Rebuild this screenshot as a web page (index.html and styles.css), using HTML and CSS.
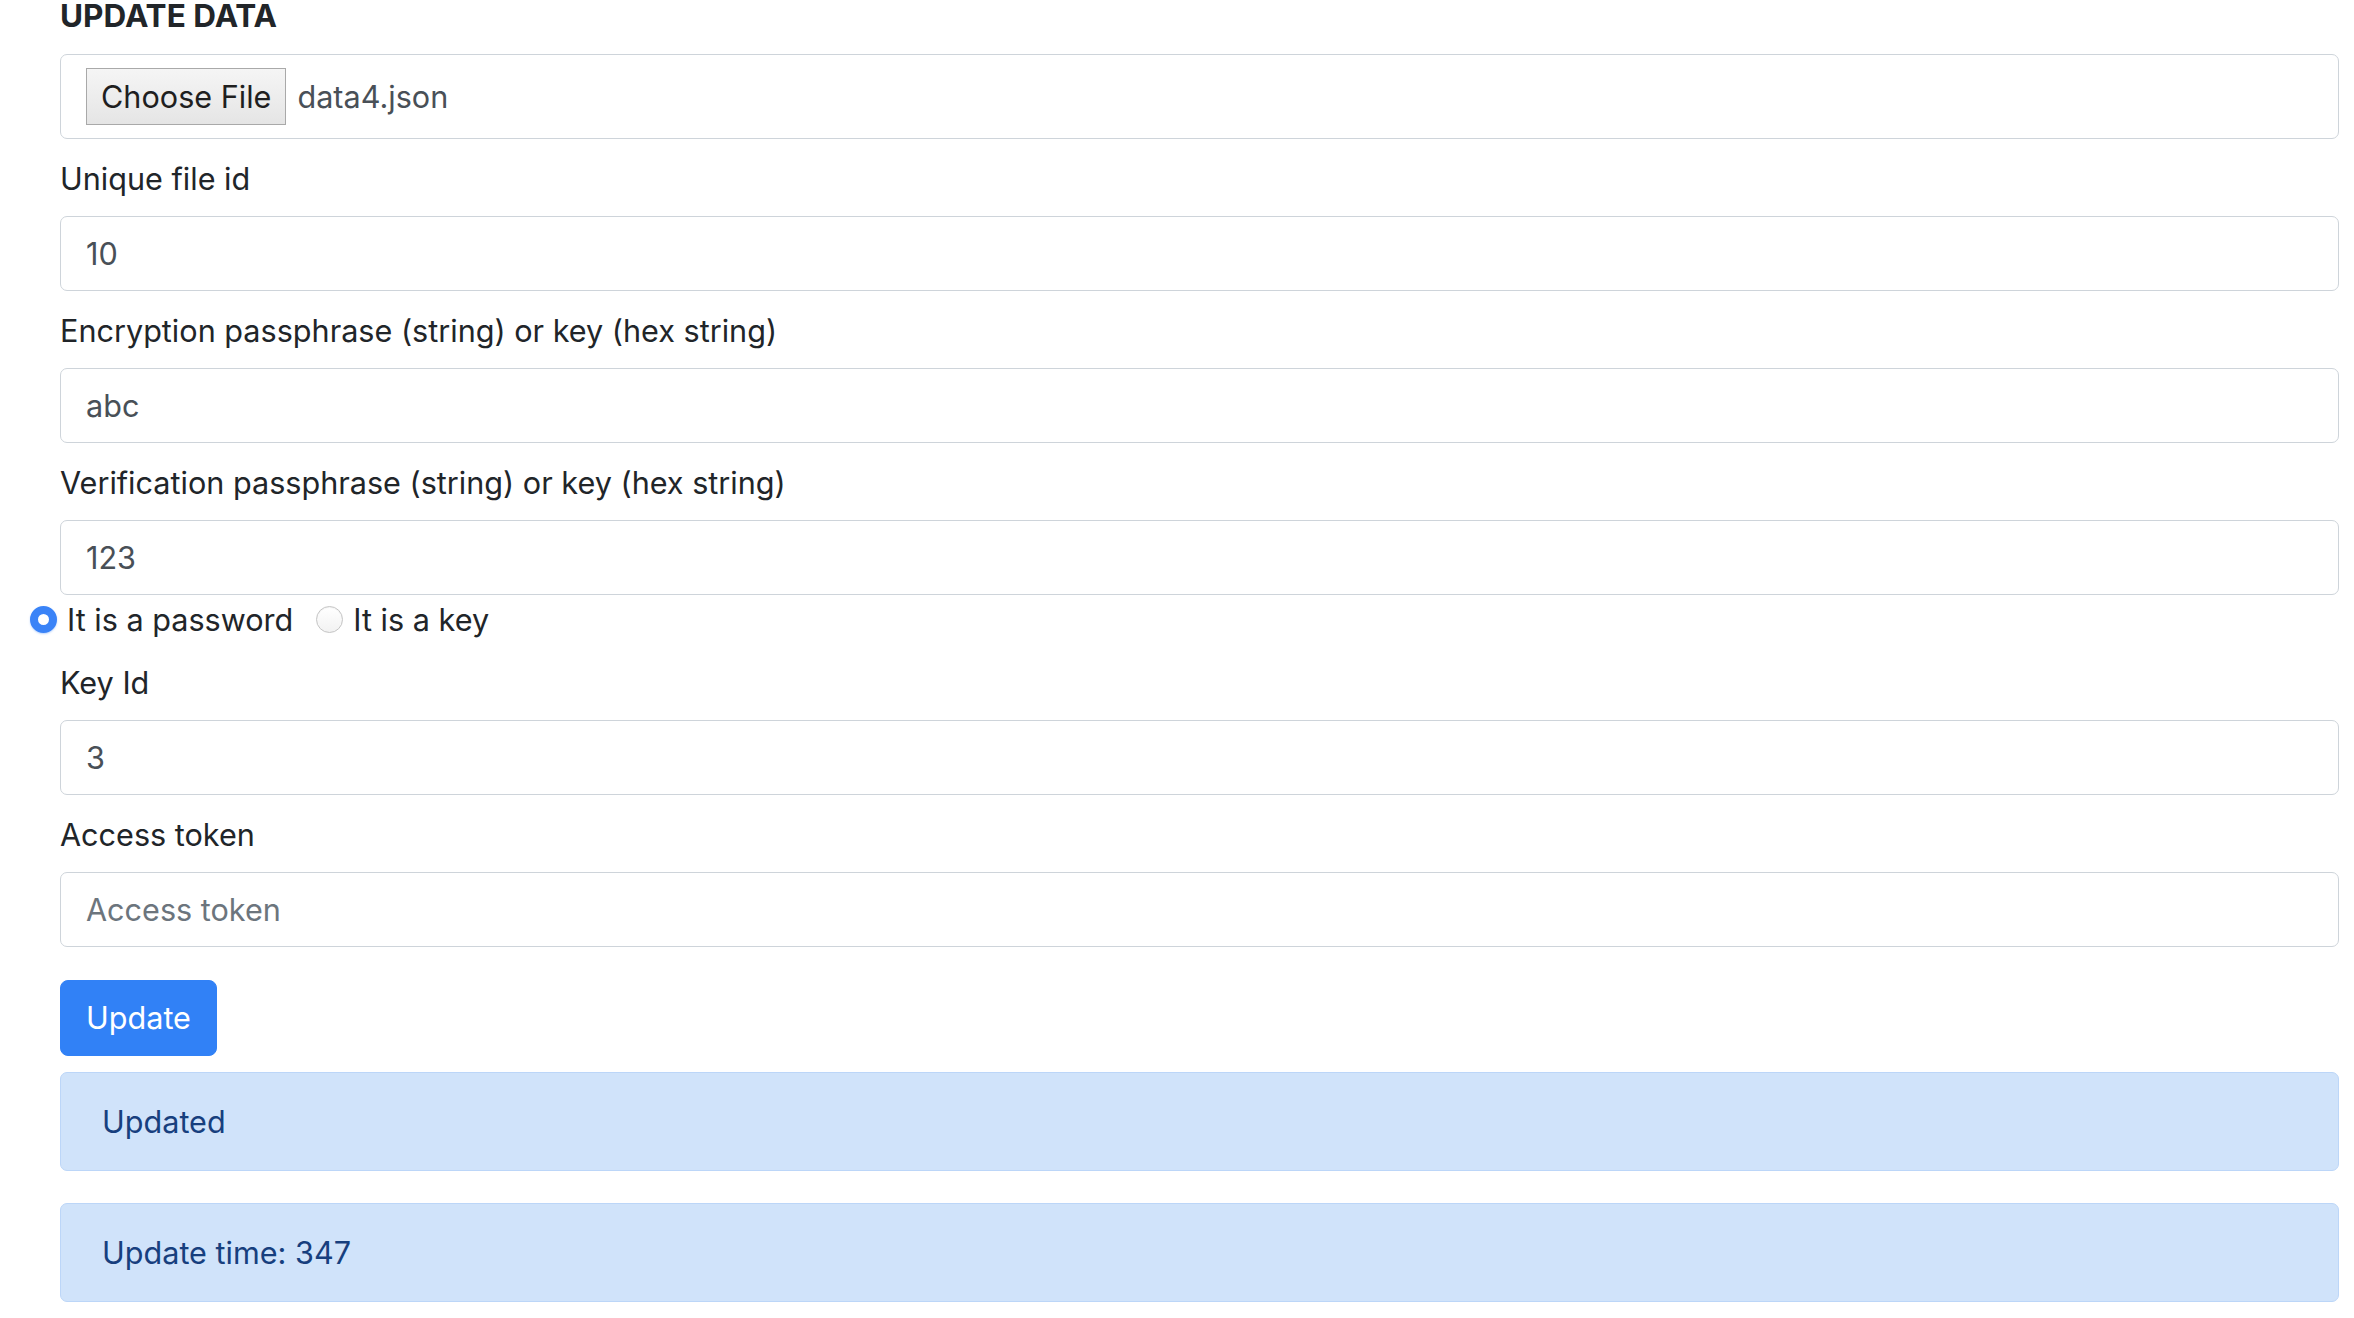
FILE: index.html
```html
<!DOCTYPE html>
<html lang="en">
  <head>
    <meta charset="UTF-8" />
    <meta name="viewport" content="width=device-width, initial-scale=1.0" />
    <title>Update data</title>
    <link rel="stylesheet" href="styles.css">
  </head>
  <body>
    <div class="page">
      <h5 class="title">UPDATE DATA</h5>

      <div class="file-box">
        <span class="file-btn">Choose File</span>
        <span class="file-name">data4.json</span>
      </div>

      <div class="group">
        <label for="fileId">Unique file id</label>
        <input class="field" type="text" id="fileId" value="10" />
      </div>

      <div class="group">
        <label for="encKey">Encryption passphrase (string) or key (hex string)</label>
        <input class="field" type="text" id="encKey" value="abc" />
      </div>

      <div class="group group-radio">
        <label for="verKey">Verification passphrase (string) or key (hex string)</label>
        <input class="field" type="text" id="verKey" value="123" />
        <div class="radios">
          <label class="radio-item">
            <input type="radio" name="kind" checked />
            <span>It is a password</span>
          </label>
          <label class="radio-item">
            <input type="radio" name="kind" />
            <span>It is a key</span>
          </label>
        </div>
      </div>

      <div class="group">
        <label for="keyId">Key Id</label>
        <input class="field" type="text" id="keyId" value="3" />
      </div>

      <div class="group">
        <label for="token">Access token</label>
        <input class="field" type="text" id="token" placeholder="Access token" />
      </div>

      <button class="btn" type="button">Update</button>

      <div class="alert">Updated</div>
      <div class="alert">Update time: 347</div>
    </div>
  </body>
</html>
```

FILE: styles.css
```css
/* Reset */
* {
  margin: 0;
  padding: 0;
  box-sizing: border-box;
}

body {
  font-family: "Inter", "Roboto", "Liberation Sans", sans-serif;
  font-size: 30.6px;
  line-height: 45px;
  color: #212529;
  background: #ffffff;
  overflow: hidden;
}

/* Page */
.page {
  padding: 0 15px 0 60px;
}

.title {
  font-size: 31.5px;
  font-weight: 700;
  line-height: 30px;
  padding-top: 1px;
  margin-bottom: 22.5px;
  color: #212529;
}

/* File picker */
.file-box {
  height: 85px;
  border: 1.5px solid #ced4da;
  border-radius: 7px;
  display: flex;
  align-items: center;
  padding: 0 25px;
  gap: 11px;
  margin-bottom: 17px;
}

.file-btn {
  height: 57px;
  padding: 0 14px;
  display: flex;
  align-items: center;
  border: 1.5px solid #a9a9a9;
  background: linear-gradient(#f5f5f5, #e5e5e5);
  color: #1f1f1f;
}

.file-name {
  color: #495057;
}

/* Form groups */
.group {
  display: flex;
  flex-direction: column;
  margin-bottom: 17px;
}

.group label {
  line-height: 45px;
  margin-bottom: 15px;
}

.group-radio {
  margin-bottom: 18px;
}

.field {
  height: 75px;
  width: 100%;
  padding: 0 25px;
  font-family: inherit;
  font-size: 30.6px;
  color: #495057;
  border: 1.5px solid #ced4da;
  border-radius: 7px;
  background: #ffffff;
  outline: none;
}

.field::placeholder {
  color: #6c757d;
}

/* Radios */
.radios {
  display: flex;
  align-items: center;
  gap: 23px;
  margin-top: 2px;
  margin-left: -30px;
}

.group .radio-item {
  display: flex;
  align-items: center;
  gap: 10px;
  margin-bottom: 0;
}

.radio-item input {
  appearance: none;
  -webkit-appearance: none;
  width: 27px;
  height: 27px;
  border-radius: 50%;
  border: 1.5px solid #c4c4c4;
  background: linear-gradient(#ffffff, #f2f2f2);
  box-shadow: inset 0 1px 1px rgba(0, 0, 0, 0.05);
}

.radio-item input:checked {
  border: 8.5px solid #3a83f7;
  background: #ffffff;
  box-shadow: 0 1px 2px rgba(58, 131, 247, 0.35);
}

/* Button */
.btn {
  height: 76px;
  padding: 0 25px;
  font-family: inherit;
  font-size: 30.6px;
  line-height: 45px;
  color: #ffffff;
  background: #3181f6;
  border: 1.5px solid #3181f6;
  border-radius: 8px;
  margin-top: 16px;
  margin-bottom: 16px;
  cursor: pointer;
}

/* Alerts */
.alert {
  padding: 26px 41px;
  line-height: 45px;
  color: #173f7e;
  background: #d0e3fa;
  border: 1.5px solid #bcd6f8;
  border-radius: 7px;
  margin-bottom: 32px;
}
```
